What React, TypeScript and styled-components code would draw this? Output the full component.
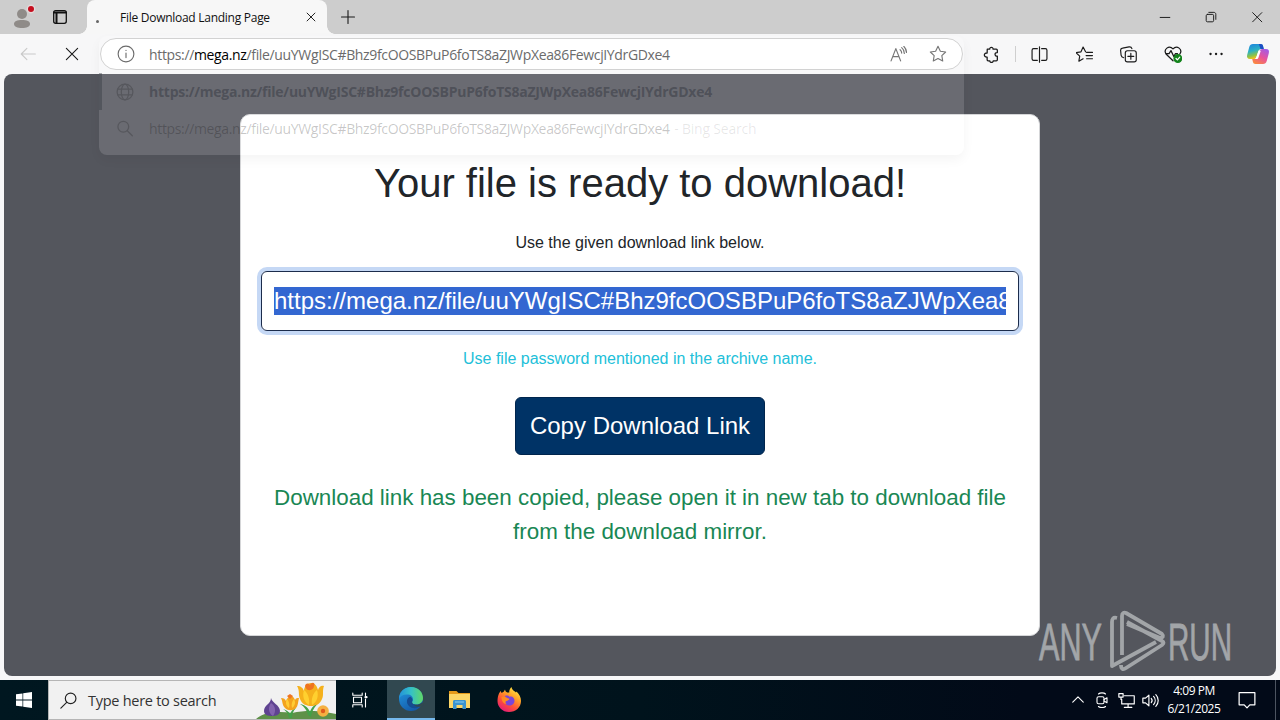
import React from 'react';
import styled, { createGlobalStyle, css } from 'styled-components';

const systemFont = css`
  font-family: 'Open Sans', 'Noto Sans', sans-serif;
`;

const rowCenter = css`
  display: flex;
  align-items: center;
`;

const GlobalStyle = createGlobalStyle`
  * {
    box-sizing: border-box;
  }

  body {
    margin: 0;
    overflow: hidden;
    font-family: 'Liberation Sans', Arial, sans-serif;
  }
`;

const Desktop = styled.div`
  width: 1280px;
  height: 720px;
  display: flex;
  flex-direction: column;
  position: relative;
  overflow: hidden;
  background: #f7f7f8;
`;

/* ---------- tab strip ---------- */

const TabStrip = styled.div`
  ${rowCenter};
  ${systemFont};
  height: 34px;
  flex: none;
  background: #cdcdcd;
`;

const StripIcons = styled.div`
  ${rowCenter};
  width: 87px;
  padding-left: 10px;
  gap: 14px;
`;

const Tab = styled.div`
  ${rowCenter};
  position: relative;
  width: 240px;
  height: 34px;
  padding: 0 9px 0 8px;
  background: #f7f7f7;
  border-radius: 8px 8px 0 0;

  &::before,
  &::after {
    content: '';
    position: absolute;
    bottom: 0;
    width: 8px;
    height: 8px;
  }

  &::before {
    left: -8px;
    background: radial-gradient(circle at 0 0, #cdcdcd 7.5px, #f7f7f7 8px);
  }

  &::after {
    right: -8px;
    background: radial-gradient(circle at 100% 0, #cdcdcd 7.5px, #f7f7f7 8px);
  }
`;

const LoadingDot = styled.span`
  width: 3px;
  height: 3px;
  margin: 9px 22px 0 1px;
  border-radius: 50%;
  background: #666;
`;

const TabTitle = styled.span`
  flex: 1;
  margin-left: -1px;
  font-size: 12px;
  letter-spacing: -0.27px;
  white-space: nowrap;
  color: #111;
`;

const NewTab = styled.div`
  ${rowCenter};
  margin-left: 13px;
`;

const WindowButtons = styled.div`
  ${rowCenter};
  margin-left: auto;
  padding-right: 16px;
  gap: 32px;
`;

/* ---------- toolbar ---------- */

const Toolbar = styled.div`
  ${rowCenter};
  height: 40px;
  flex: none;
  padding-left: 19px;
  position: relative;
  z-index: 2;
`;

const NavIcons = styled.div`
  ${rowCenter};
  flex: none;
  width: 81px;
  gap: 26px;
`;

const AddressBar = styled.div`
  ${rowCenter};
  ${systemFont};
  flex: none;
  width: 863px;
  height: 32px;
  padding: 0 15px 0 16px;
  background: #fff;
  border: 1px solid #d2d2d2;
  border-radius: 16px;
`;

const UrlText = styled.span<{ $bold?: boolean }>`
  flex: 1;
  margin-left: 14px;
  font-size: 14px;
  font-weight: ${(p) => (p.$bold ? 700 : 400)};
  letter-spacing: ${(p) => (p.$bold ? '-0.24px' : '-0.35px')};
  white-space: nowrap;
  color: #6b6b6b;

  b {
    font-weight: 400;
    color: #000;
  }
`;

const AddressActions = styled.div`
  ${rowCenter};
  gap: 22px;
`;

const ToolIcons = styled.div`
  ${rowCenter};
  margin-left: auto;
  padding-right: 1px;
`;

const ToolIcon = styled.span<{ $width: number }>`
  display: flex;
  justify-content: center;
  width: ${(p) => p.$width}px;
`;

const Separator = styled.span`
  width: 1px;
  height: 16px;
  background: #cfcfcf;
`;

/* ---------- fading suggestion list ---------- */

const Suggestions = styled.div`
  ${systemFont};
  position: absolute;
  z-index: 1;
  left: 99px;
  top: 36px;
  width: 865px;
  height: 119px;
  padding-top: 37px;
  border-radius: 8px;
  background: rgba(255, 255, 255, 0.13);
  box-shadow: 0 5px 12px rgba(0, 0, 0, 0.045);
`;

const Suggestion = styled.div<{ $active?: boolean }>`
  ${rowCenter};
  height: 37px;
  padding-left: 14px;
  border-left: 3px solid ${(p) => (p.$active ? 'rgba(50, 54, 62, 0.4)' : 'transparent')};
`;

const SuggestionIcon = styled.span`
  display: flex;
  width: 19px;
  opacity: 0.18;
`;

const SuggestionText = styled(UrlText)`
  color: ${(p) => (p.$bold ? 'rgba(34, 38, 48, 0.4)' : 'rgba(0, 0, 0, 0.22)')};

  small {
    margin-left: 1px;
    font-size: 14px;
    letter-spacing: -0.2px;
    color: rgba(0, 0, 0, 0.1);
  }
`;

/* ---------- page ---------- */

const Viewport = styled.main`
  width: 1272px;
  height: 602px;
  margin: 0 auto 4px;
  padding-top: 40px;
  flex: none;
  background: #54565d;
  border-radius: 8px;
`;

const Card = styled.section`
  width: 800px;
  height: 522px;
  margin: 0 auto;
  padding: 44px 21px 0;
  display: flex;
  flex-direction: column;
  align-items: center;
  background: #fff;
  border: 1px solid #d5d6d8;
  border-radius: 10px;
  text-align: center;
  color: #212529;
`;

const Title = styled.h1`
  margin: 0 0 24px;
  font-size: 40px;
  font-weight: 400;
  line-height: 48px;
  white-space: nowrap;
`;

const Hint = styled.p<{ $info?: boolean }>`
  margin: 0;
  font-size: 16px;
  line-height: 24px;
  color: ${(p) => (p.$info ? '#22bfd9' : '#212529')};
`;

const LinkField = styled.div`
  width: 758px;
  height: 60px;
  margin: 16px 0;
  padding: 15px 12px;
  border: 1px solid #1c2c4c;
  border-radius: 6px;
  box-shadow: 0 0 0 4px #c5d8f5;
`;

const SelectedLink = styled.div`
  height: 28px;
  overflow: hidden;
  font-size: 24px;
  line-height: 28px;
  text-align: left;
  white-space: nowrap;
  color: #fff;
  background: #3367d1;
`;

const CopyButton = styled.button`
  width: 250px;
  height: 58px;
  margin: 26px 0;
  padding: 0;
  border: 1px solid #00254d;
  border-radius: 6px;
  background: #003366;
  color: #fff;
  font: 24px 'Liberation Sans', Arial, sans-serif;
`;

const Success = styled.p`
  margin: 0;
  width: 758px;
  font-size: 22.4px;
  line-height: 34px;
  color: #198754;
`;

const Watermark = styled.svg`
  position: absolute;
  left: 1036px;
  top: 606px;
`;

/* ---------- taskbar ---------- */

const Taskbar = styled.footer`
  ${rowCenter};
  ${systemFont};
  height: 40px;
  flex: none;
  background: linear-gradient(90deg, #001720 0%, #00131c 50%, #020a18 80%, #020a18 100%);
  color: #fff;
`;

const TaskButton = styled.div<{ $active?: boolean; $width?: number }>`
  ${rowCenter};
  justify-content: center;
  width: ${(p) => p.$width ?? 48}px;
  height: 40px;
  background: ${(p) => (p.$active ? '#314850' : 'transparent')};
  border-bottom: ${(p) => (p.$active ? '2px solid #76b9ed' : 'none')};
`;

const SearchBox = styled.div`
  ${rowCenter};
  width: 288px;
  height: 40px;
  padding-left: 11px;
  background: #f1f1f1;
  border: 1px solid #b5b5b5;
  border-right: 0;
  color: #333;
  font-size: 14.5px;
  letter-spacing: -0.27px;

  span {
    flex: 1;
    margin-left: 11px;
    white-space: nowrap;
  }
`;

const TaskView = styled(TaskButton)`
  padding-right: 3px;
`;

const Tray = styled.div`
  ${rowCenter};
  margin-left: auto;
`;

const TrayIcon = styled.span`
  display: flex;
  justify-content: center;
  width: 24px;
`;

const Clock = styled.div`
  width: 64px;
  font-size: 12px;
  line-height: 18px;
  letter-spacing: -0.45px;
  text-align: center;
  white-space: nowrap;
`;

const ShowDesktop = styled.div`
  width: 5px;
  height: 40px;
  margin-left: 7px;
  border-left: 1px solid #4c5460;
`;

type IconProps = { size?: number; color?: string; width?: number; children: React.ReactNode };

const Icon = ({ size = 16, color = '#1b1b1b', width = 1.1, children }: IconProps) => (
  <svg
    width={size}
    height={size}
    viewBox="0 0 16 16"
    fill="none"
    stroke={color}
    strokeWidth={width}
    strokeLinecap="round"
    strokeLinejoin="round"
  >
    {children}
  </svg>
);

const STAR = 'M8 1.2l2.1 4.3 4.7.7-3.4 3.3.8 4.7L8 12l-4.2 2.2.8-4.7L1.2 6.2l4.7-.7z';

const Profile = () => (
  <svg width="28" height="28" viewBox="0 0 28 28">
    <circle cx="12" cy="11" r="5" fill="#8f8b88" />
    <path d="M4 21c0-2.600 3-4 8-4s8 1.400 8 4-3.500 4-8 4-8-1.400-8-4z" fill="#8f8b88" />
    <circle cx="21" cy="6" r="4.400" fill="#e4dada" />
    <circle cx="21" cy="6" r="3" fill="#c50f1f" />
  </svg>
);

const Copilot = () => (
  <svg width="24" height="22" viewBox="0 0 24 22">
    <defs>
      <linearGradient id="cpA" x1="0" y1="0" x2="0.300" y2="1">
        <stop offset="0" stopColor="#1b7fe0" />
        <stop offset="0.500" stopColor="#2bb1c4" />
        <stop offset="0.800" stopColor="#8bc34a" />
        <stop offset="1" stopColor="#f3c21b" />
      </linearGradient>
      <linearGradient id="cpB" x1="0.800" y1="0" x2="0.200" y2="1">
        <stop offset="0" stopColor="#a35be6" />
        <stop offset="0.500" stopColor="#e8539b" />
        <stop offset="1" stopColor="#fb8a3c" />
      </linearGradient>
    </defs>
    <path d="M7 1h7.500c1.500 0 2.200.8 2.600 2.200L17.800 6h-2.600c-1.700 0-2.500.9-3 2.500l-1.700 5.200C10 15.300 9 16 7.500 16H4c-2.500 0-3.500-1.600-2.800-4.200l2-7.500C3.800 2 5 1 7 1z" fill="url(#cpA)" />
    <path d="M17 21H9.500c-1.500 0-2.200-.8-2.600-2.200L6.200 16h2.600c1.700 0 2.500-.9 3-2.500l1.700-5.200C14 6.700 15 6 16.500 6H20c2.500 0 3.500 1.600 2.800 4.200l-2 7.500C20.200 20 19 21 17 21z" fill="url(#cpB)" />
    <path d="M12.800 1h2c1.300 0 2 .8 2.300 2.200l.7 2.800h-3.300z" fill="#1d4fc4" />
    <path d="M10.300 14.200l2.300-6.400h2.200l-2.500 7.200c-.3.700-.7 1-1.300 1h-1.800z" fill="#fff" />
  </svg>
);

const Flowers = () => (
  <svg width="80" height="38" viewBox="0 0 80 38">
    <path d="M0 38c8-7 22-8 36-6 18-4 34-1 44 1v5z" fill="#5e9148" />
    <path d="M52 34c-2-7-5-9-8-11 6 1 9 5 10 8 1-4 5-8 9-10-4 5-7 8-8 15zM33 37c-1-5-3-7-6-9 4 1 6 3 7 5 1-3 3-5 6-6-3 3-4 6-4 10z" fill="#43a047" />
    <path d="M15 17c1 5 9 7 9 13 0 4-4 5-8 5s-8-1-8-5c0-6 7-7 7-13z" fill="#5f4391" />
    <path d="M15 22c5 3 5 9 2 13-5-3-5-9-2-13z" fill="#8263ae" />
    <path d="M41 5c4 0 6 2 7 5 0-4 3-8 7-8s6 3 7 7c1-3 3-5 6-4-2 5 0 9-2 13-2 5-6 7-11 7s-9-2-11-7c-2-5 0-8-3-13z" fill="#f5b11c" />
    <path d="M48 9c4 3 6 9 5 15-5-3-7-9-5-15zm13 0c-4 3-6 9-5 15 5-3 7-9 5-15z" fill="#ffd02f" />
    <path d="M49 5c1-3 3-3 5-1 2-4 6-2 4 1 0 5-8 6-9 0z" fill="#ef7420" />
    <path d="M25 17c3 0 4 1 5 3 1-3 3-5 5-5s3 2 4 4c1-2 2-2 4-2-1 4-1 8-3 10-3 3-8 3-11 0-3-3-2-6-4-10z" fill="#f3a31d" />
    <path d="M31 18c2 2 3 6 2 9-3-2-4-6-2-9zm7 0c-2 2-3 6-2 9 3-2 4-6 2-9z" fill="#ffcc35" />
    <path d="M31 15l3-2 3 2-3 3z" fill="#ef7420" />
    <circle cx="67" cy="30" r="5.800" fill="#f5b041" />
    <circle cx="67" cy="30" r="2.200" fill="#e05b1c" />
  </svg>
);

const EdgeLogo = () => (
  <svg width="26" height="26" viewBox="0 0 26 26">
    <defs>
      <linearGradient id="edTop" x1="0" y1="0.500" x2="1" y2="0.500">
        <stop offset="0" stopColor="#2391db" />
        <stop offset="0.500" stopColor="#35c1c7" />
        <stop offset="1" stopColor="#61d866" />
      </linearGradient>
      <linearGradient id="edLow" x1="0" y1="0" x2="0.600" y2="1">
        <stop offset="0" stopColor="#239be4" />
        <stop offset="1" stopColor="#1459a8" />
      </linearGradient>
    </defs>
    <circle cx="13" cy="13" r="12" fill="url(#edLow)" />
    <path d="M1 13C1 6 6 1 13 1c7.500 0 12 5.500 12 11 0 4-3 6.500-6.500 6.500-3 0-5-1.200-4.500-2.500 2-2.500 1-7-4-7.500C5.500 8 2 10 1 13z" fill="url(#edTop)" />
    <path d="M14 16c-1 1.500 1.500 2.800 4.500 2.800 2 0 3.700-.6 5-1.800-1 1.700-2 3.200-3.600 4.500C15 24 8 20 9 14.500c.4-2 1.700-3.300 3.300-3.700C14.800 12.500 15 14.500 14 16z" fill="#154b91" />
    <path d="M14 16c-1 1.500 1.500 2.800 4.500 2.800 2 0 4-.7 5.500-2.300l3 2.500-4 1.500c-4 1-8-.5-9-4.500z" fill="#314850" />
  </svg>
);

const FolderLogo = () => (
  <svg width="24" height="20" viewBox="0 0 24 20">
    <path d="M1 1h7.500l2 2H22v5H1z" fill="#e59a1a" />
    <path d="M1 4h21v14H1z" fill="#fcd667" />
    <path d="M5 11.500c0-1 .7-1.500 1.500-1.500h10c.8 0 1.500.5 1.500 1.500V19h-3.500v-4h-6v4H5z" fill="#3a93cf" />
    <path d="M7 12h9" stroke="#7bc4ec" strokeWidth="1.200" />
  </svg>
);

const FirefoxLogo = () => (
  <svg width="26" height="26" viewBox="0 0 26 26">
    <defs>
      <linearGradient id="ffx" x1="0.800" y1="0" x2="0.200" y2="1">
        <stop offset="0" stopColor="#fff04a" />
        <stop offset="0.350" stopColor="#ffa126" />
        <stop offset="0.650" stopColor="#ff4f38" />
        <stop offset="1" stopColor="#e21580" />
      </linearGradient>
    </defs>
    <path d="M3 6.500L4.500 4l1.200 2c.7-.7 1.300-1 2-1.200L9 2.500c.3 1.500 1 2.500 2.300 3h2C13 3.500 14 1.500 15.500 0c.4 3 2.500 3.500 4.500 5.500l.5-1C23.500 7.500 25 10.500 25 14c0 6.500-5.300 11-12 11S1.500 20 1.500 14c0-3 .5-5 1.500-7.500z" fill="url(#ffx)" />
    <path d="M9 9c2-1 3.500-.3 4.500.8 2.500-1 5 .9 5 3.900 0 3-2.400 4.800-5 4.800-3 0-5-2-5-4.500l3.500-1C10.500 11.700 9.500 11 9 9z" fill="#7a45d8" />
    <path d="M5.500 10c1.500-1 3.300-.7 4.500.3 1 1 2.500 1.200 3.500 1.500-.5 1.700-2 1.700-3.500 2.500-1 .7-.5 2 .5 2.700-3 0-5-3-5-7z" fill="#ff8a22" />
  </svg>
);

const URL_TAIL = '/file/uuYWgISC#Bhz9fcOOSBPuP6foTS8aZJWpXea86FewcjIYdrGDxe4';
const FULL_URL = `https://mega.nz${URL_TAIL}`;

export default function App() {
  return (
    <Desktop>
      <GlobalStyle />
      <TabStrip>
        <StripIcons>
          <Profile />
          <Icon color="#111" width={1.3}>
            <rect x="1.700" y="1.700" width="12.600" height="12.600" rx="2" />
            <path d="M2 3.600h12M4.500 4v10" strokeWidth="2" />
          </Icon>
        </StripIcons>
        <Tab>
          <LoadingDot />
          <TabTitle>File Download Landing Page</TabTitle>
          <Icon size={14}>
            <path d="M3.500 3.500l9 9m0-9l-9 9" />
          </Icon>
        </Tab>
        <NewTab>
          <Icon>
            <path d="M8 1.500v13M1.500 8h13" />
          </Icon>
        </NewTab>
        <WindowButtons>
          <Icon size={14}>
            <path d="M2.500 8.500h11" />
          </Icon>
          <Icon size={14}>
            <rect x="2.500" y="5" width="8.500" height="8.500" rx="1.500" />
            <path d="M5.500 2.700h5.800c1.300 0 2.200.9 2.200 2.200v5.800" />
          </Icon>
          <Icon size={14}>
            <path d="M3 3l10.500 10.500M13.500 3L3 13.500" />
          </Icon>
        </WindowButtons>
      </TabStrip>

      <Toolbar>
        <NavIcons>
          <Icon size={18} color="#c9c9c9" width={1}>
            <path d="M14.500 8H2m5-5L2 8l5 5" />
          </Icon>
          <Icon size={18} width={1}>
            <path d="M3 3l10 10m0-10L3 13" />
          </Icon>
        </NavIcons>
        <AddressBar>
          <Icon size={18} color="#6b6b6b" width={1}>
            <circle cx="8" cy="8" r="7" />
            <path d="M8 7.200v4M8 4.700v.2" />
          </Icon>
          <UrlText>
            https://<b>mega.nz</b>
            {URL_TAIL}
          </UrlText>
          <AddressActions>
            <Icon size={17} color="#767676">
              <path d="M1 14L5.500 2.500 10 14M2.600 10h5.800M9.500 3.500c1 .8 1.500 2 1.500 3.200M11 1.500c1.600 1.300 2.500 3 2.500 5.500M13 .3c1.600 1.700 2.500 3.500 2.500 5.700" />
            </Icon>
            <Icon size={18} color="#767676" width={1}>
              <path d={STAR} />
            </Icon>
          </AddressActions>
        </AddressBar>
        <ToolIcons>
          <ToolIcon $width={48}>
            <Icon size={17} width={1.2}>
              <path d="M4 3h2.300C6 .8 9.800.8 9.500 3H12.500c.7 0 1 .3 1 1v2.200c-2.900-.5-2.900 3.800 0 3.300V13c0 .7-.3 1-1 1H9.600c.2 2-3.400 2-3.200 0H4.800c-.6 0-.9-.3-.9-1v-2.600C.4 10.700.4 6.300 3.900 6.600z" />
            </Icon>
          </ToolIcon>
          <Separator />
          <ToolIcon $width={46}>
            <Icon size={17}>
              <path d="M6 2.500H2.500c-1 0-1.500.5-1.500 1.500v8c0 1 .5 1.500 1.500 1.500H6M10 2.500h3.500c1 0 1.500.5 1.500 1.500v8c0 1-.5 1.500-1.500 1.500H10M8 .8v14.400" />
            </Icon>
          </ToolIcon>
          <ToolIcon $width={44}>
            <Icon size={17}>
              <path d="M9 5.500L6.700 1 4.700 5.500 0 6.200l3.500 3.300-.8 4.800 4-2.300M10 6h5.500M9.500 9h6M10 12h5.500" />
            </Icon>
          </ToolIcon>
          <ToolIcon $width={44}>
            <Icon size={17}>
              <path d="M3.500 11C1.800 10.500 1.300 10 1 8.500L.6 4.500C.4 3 1 2.200 2.400 2L8.500.8c1.400-.2 2.300.3 2.700 1.700" />
              <rect x="5" y="4.500" width="10.300" height="10.500" rx="2" />
              <path d="M10.200 7v5.500M7.400 9.700H13" />
            </Icon>
          </ToolIcon>
          <ToolIcon $width={45}>
            <Icon size={18}>
              <path d="M8 14L2 8.200C-1 4 4.500-.5 8 3.500c3.500-4 9 .5 6 4.700M1.500 7.700h3L6.200 5l2.500 5.300 1.500-2.600H12" />
              <circle cx="12.300" cy="12" r="3.400" fill="#13831b" stroke="#13831b" />
              <path d="M10.700 12l1.200 1.200 2.100-2.400" stroke="#fff" />
            </Icon>
          </ToolIcon>
          <ToolIcon $width={42}>
            <Icon>
              <path d="M2.500 8h.1M8 8h.1M13.500 8h.1" strokeWidth="2.300" />
            </Icon>
          </ToolIcon>
          <ToolIcon $width={42}>
            <Copilot />
          </ToolIcon>
        </ToolIcons>
      </Toolbar>

      <Suggestions>
        <Suggestion $active>
          <SuggestionIcon>
            <Icon size={18} color="#000">
              <circle cx="8" cy="8" r="7" />
              <ellipse cx="8" cy="8" rx="3.300" ry="7" />
              <path d="M1.500 5.500h13M1.500 10.500h13" />
            </Icon>
          </SuggestionIcon>
          <SuggestionText $bold>{FULL_URL}</SuggestionText>
        </Suggestion>
        <Suggestion>
          <SuggestionIcon>
            <Icon size={18} color="#000">
              <circle cx="6.500" cy="6" r="4.800" />
              <path d="M10 9.500l4.500 4.500" />
            </Icon>
          </SuggestionIcon>
          <SuggestionText>
            {FULL_URL}
            <small> - Bing Search</small>
          </SuggestionText>
        </Suggestion>
      </Suggestions>

      <Viewport>
        <Card>
          <Title>Your file is ready to download!</Title>
          <Hint>Use the given download link below.</Hint>
          <LinkField>
            <SelectedLink>{FULL_URL}</SelectedLink>
          </LinkField>
          <Hint $info>Use file password mentioned in the archive name.</Hint>
          <CopyButton>Copy Download Link</CopyButton>
          <Success>
            Download link has been copied, please open it in new tab to download file from the
            download mirror.
          </Success>
        </Card>
      </Viewport>

      <Watermark width="210" height="68" viewBox="0 0 210 68">
        <g
          fill="#a2a5a8"
          stroke="#a2a5a8"
          strokeWidth="0.800"
          fontFamily="'Liberation Sans', sans-serif"
          fontSize="52"
        >
          <text x="3" y="53.500" textLength="63" lengthAdjust="spacingAndGlyphs">ANY</text>
          <text x="132" y="53.500" textLength="64" lengthAdjust="spacingAndGlyphs">RUN</text>
        </g>
        <g fill="none" stroke="#a2a5a8" strokeWidth="3.800" strokeLinejoin="round">
          <path d="M81 12c-4-1-5 1-5 4v44l44-24M86 49V10c0-3 2-4 4-3l36 21c2 2 1 4-2 4L91 18M85 59c0 4 2 5 5 3l36-23c2-2 2-3 0-4L91 16" />
        </g>
      </Watermark>

      <Taskbar>
        <TaskButton>
          <svg width="16" height="16" viewBox="0 0 16 16" fill="#fff">
            <path d="M0 2.300l6.500-.9v6.200H0zM7.200 1.300L16 0v7.600H7.200zM0 8.400h6.500v6.200L0 13.700zM7.200 8.400H16V16l-8.800-1.300z" />
          </svg>
        </TaskButton>
        <SearchBox>
          <Icon size={17} color="#222">
            <circle cx="10" cy="6" r="5" />
            <path d="M6.300 9.700L.8 15.200" />
          </Icon>
          <span>Type here to search</span>
          <Flowers />
        </SearchBox>
        <TaskView $width={51}>
          <Icon color="#fff">
            <path d="M.8 1v2.200h9.400V1M.8 15v-2.200h9.400V15M1.500 5.300h8v5.400h-8zM13.500 1v2.500M13.500 7v8" />
            <path d="M13.500 5.200h1" strokeWidth="2.200" />
          </Icon>
        </TaskView>
        <TaskButton $active>
          <EdgeLogo />
        </TaskButton>
        <TaskButton $width={50}>
          <FolderLogo />
        </TaskButton>
        <TaskButton>
          <FirefoxLogo />
        </TaskButton>
        <Tray>
          <TrayIcon>
            <Icon size={14} color="#fff" width={1.3}>
              <path d="M2 10.500l6-6 6 6" />
            </Icon>
          </TrayIcon>
          <TrayIcon>
            <Icon color="#fff">
              <rect x="3" y="4.700" width="7" height="7" rx="1.500" />
              <path d="M10 7.500l3-1.700v5L10 9M4.500 2C6 .5 10 .5 11.500 2M4.500 14.500c1.500 1.400 5.500 1.400 7 0" />
            </Icon>
          </TrayIcon>
          <TrayIcon>
            <Icon size={17} color="#fff">
              <path d="M6 3.500h9.300v7.700H3.500V7M6 14.500h7M9.500 11.500v3M.8 1.500h4v3.300h-4zM2.800 5v2" />
            </Icon>
          </TrayIcon>
          <TrayIcon>
            <Icon size={17} color="#fff">
              <path d="M.8 5.800v4.400h2.500L6.500 13V3L3.300 5.800zM8.700 6c1 1.200 1 2.800 0 4M10.900 4.200c2 2.200 2 5.400 0 7.600M13 2.500c3 3 3 8 0 11" />
            </Icon>
          </TrayIcon>
          <Clock>
            4:09 PM
            <br />
            6/21/2025
          </Clock>
          <TaskButton $width={42}>
            <Icon size={18} color="#fff">
              <path d="M1 1.500h14v10.800h-4.500L8 15l-2.500-2.700H1z" />
            </Icon>
          </TaskButton>
          <ShowDesktop />
        </Tray>
      </Taskbar>
    </Desktop>
  );
}
